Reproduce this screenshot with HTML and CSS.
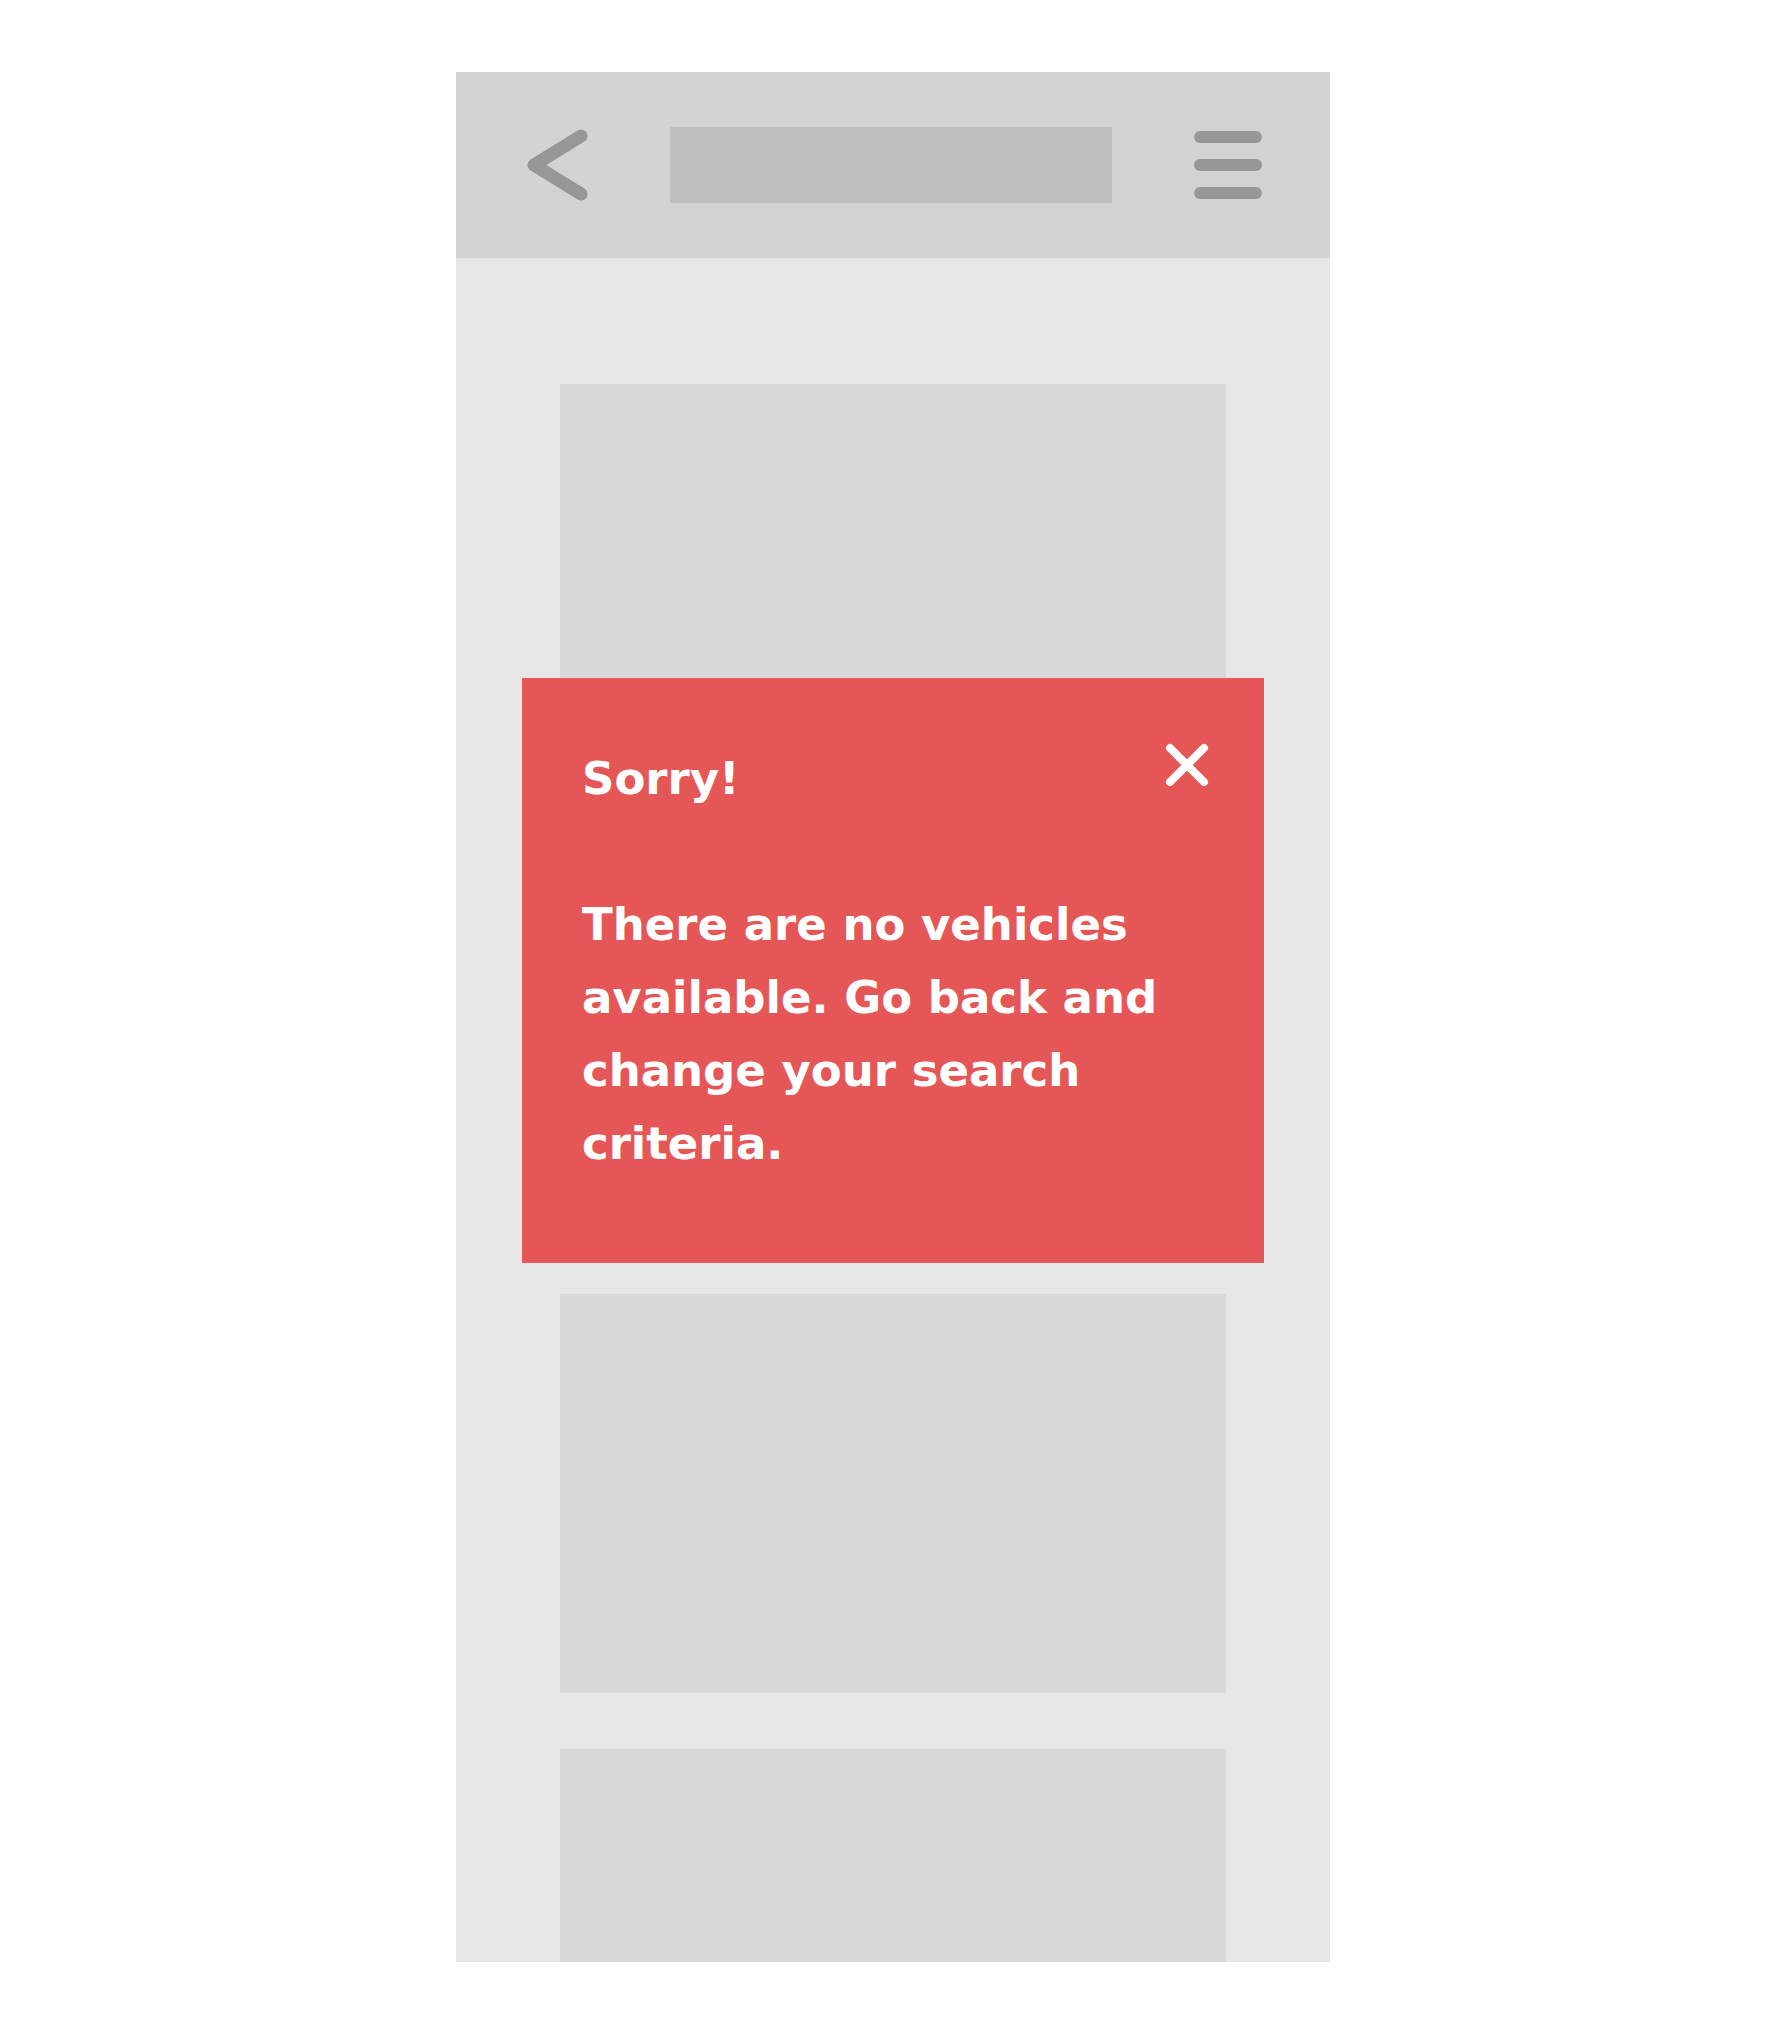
FILE: index.html
```html
<!DOCTYPE html>
<html lang="en">

<head>
    <meta charset="UTF-8" />
    <meta name="viewport" content="width=device-width, initial-scale=1.0" />
    <title>No vehicles</title>
    <link rel="stylesheet" href="styles.css">
</head>

<body>

    <!-- Phone mockup -->
    <div class="phone">

        <!-- Top bar -->
        <header class="topbar">
            <svg class="back-icon" width="62" height="72" viewBox="0 0 62 72">
                <polyline points="55,7 8,36 55,65" fill="none" stroke="#979797" stroke-width="13" stroke-linecap="round" stroke-linejoin="round" />
            </svg>
            <div class="title-bar"></div>
            <div class="menu-icon">
                <span></span>
                <span></span>
                <span></span>
            </div>
        </header>

        <!-- Results list -->
        <main class="results">
            <div class="card"></div>
            <div class="card"></div>
            <div class="card"></div>
            <div class="card"></div>

            <!-- Error message -->
            <div class="alert">
                <button class="close-btn" aria-label="Close">
                    <svg width="44" height="44" viewBox="0 0 44 44">
                        <path d="M5 5 L39 39 M39 5 L5 39" stroke="#fff" stroke-width="8" stroke-linecap="round" />
                    </svg>
                </button>
                <p class="alert-title">Sorry!</p>
                <p class="alert-text">There are no vehicles available. Go back and change your search criteria.</p>
            </div>
        </main>

    </div>

</body>

</html>
```

FILE: styles.css
```css
* {
    box-sizing: border-box;
    margin: 0;
    padding: 0;
}

body {
    background-color: #fff;
    font-family: 'DejaVu Sans', sans-serif;
}

.phone {
    width: 874px;
    height: 1890px;
    margin: 72px auto 0;
    background-color: #e6e6e6;
    overflow: hidden;
    display: flex;
    flex-direction: column;
}

/* Top bar */

.topbar {
    height: 186px;
    flex-shrink: 0;
    background-color: #d3d3d3;
    display: flex;
    align-items: center;
    justify-content: space-between;
    padding: 0 68px 0 70px;
}

.back-icon {
    display: block;
}

.title-bar {
    width: 442px;
    height: 76px;
    background-color: #bfbfbf;
}

.menu-icon {
    width: 68px;
    display: flex;
    flex-direction: column;
    gap: 16px;
}

.menu-icon span {
    display: block;
    height: 12px;
    border-radius: 6px;
    background-color: #979797;
}

/* Liste */

.results {
    position: relative;
    flex: 1;
    display: flex;
    flex-direction: column;
    gap: 56px;
    padding: 126px 104px 0;
}

.card {
    flex-shrink: 0;
    height: 399px;
    background-color: #d8d8d8;
}

/* Alert */

.alert {
    position: absolute;
    top: 420px;
    left: 66px;
    width: 742px;
    height: 585px;
    background-color: #e55757;
    color: #fff;
    padding: 64px 60px 0;
    font-size: 45px;
    font-weight: bold;
    line-height: 73px;
}

.alert-title {
    margin-bottom: 73px;
}

.close-btn {
    position: absolute;
    top: 65px;
    right: 55px;
    width: 44px;
    height: 44px;
    background: none;
    border: none;
    cursor: pointer;
}

.close-btn svg {
    display: block;
}
```
